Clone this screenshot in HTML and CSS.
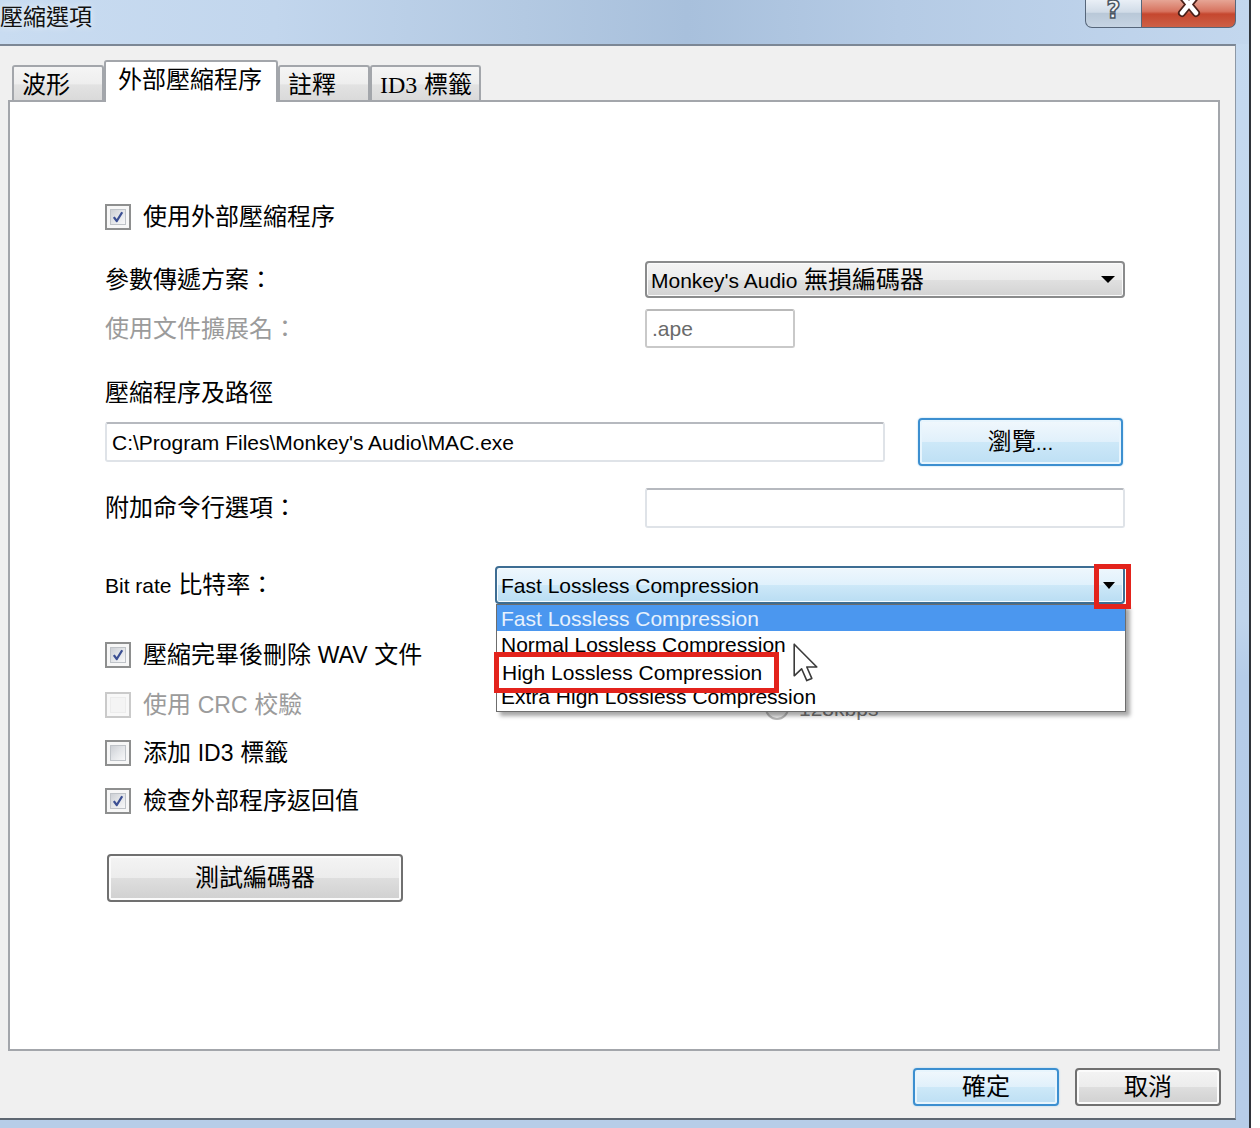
FILE: index.html
```html
<!DOCTYPE html>
<html>
<head>
<meta charset="utf-8">
<title>壓縮選項</title>
<link rel="stylesheet" href="styles.css">
</head>
<body>
<div class="window">
  <div class="titlebar">
    <div class="title">壓縮選項</div>
    <div class="caps">
      <div class="cap help"><span class="q">?</span></div>
      <div class="cap close">
        <svg class="xicon" width="30" height="20" viewBox="0 0 30 20"><path d="M8 -3 L22 14 M22 -3 L8 14" stroke="#4a2019" stroke-width="8" stroke-linecap="round"/><path d="M8 -3 L22 14 M22 -3 L8 14" stroke="#ffffff" stroke-width="4.5" stroke-linecap="round"/></svg>
      </div>
    </div>
  </div>
  <div class="client">
    <div class="tabs">
      <div class="tab t1">波形</div>
      <div class="tab active">外部壓縮程序</div>
      <div class="tab t3">註釋</div>
      <div class="tab t4"><span class="en-tab">ID3</span>&nbsp;標籤</div>
    </div>
    <div class="panel">
      <div class="row r-a">
        <span class="cb"><span class="cbi"><svg viewBox="0 0 16 16"><path d="M3.2 8.2 L6.6 12.6 L12.8 2.6" fill="none" stroke="#3b4f93" stroke-width="2.6" stroke-linejoin="round"/></svg></span></span>
        <span class="cb-label">使用外部壓縮程序</span>
      </div>
      <div class="row r-b">
        <div class="lbl">參數傳遞方案：</div>
        <div class="combo normal w480"><span class="ctext"><span class="en">Monkey's Audio</span> 無損編碼器</span><span class="arrow"></span></div>
      </div>
      <div class="row r-c">
        <div class="lbl dis">使用文件擴展名：</div>
        <div class="input ext"><span class="en gray">.ape</span></div>
      </div>
      <div class="row r-d">
        <div class="lbl">壓縮程序及路徑</div>
      </div>
      <div class="row r-e">
        <div class="input path"><span class="en">C:\Program Files\Monkey's Audio\MAC.exe</span></div>
        <div class="btn blue browse">瀏覽<span class="en">...</span></div>
      </div>
      <div class="row r-f">
        <div class="lbl">附加命令行選項：</div>
        <div class="input w480"></div>
      </div>
      <div class="row r-g">
        <div class="lbl lbl-g"><span class="en">Bit rate</span> 比特率：</div>
        <div class="combo hot w630">
          <span class="ctext en">Fast Lossless Compression</span><span class="arrow hot-arrow"></span>
          <div class="behind"><span class="radio"></span><span class="en">128kbps</span></div>
          <div class="list">
            <div class="item sel en">Fast Lossless Compression</div>
            <div class="item en">Normal Lossless Compression</div>
            <div class="item en">High Lossless Compression</div>
            <div class="item en">Extra High Lossless Compression</div>
          </div>
          <div class="redbox arrowbox"></div>
          <div class="redbox highbox"><span class="en">High Lossless Compression</span></div>
          <svg class="cursor" width="26" height="40" viewBox="0 0 13 20"><path d="M0.6 0.6 L0.6 16.4 L4.3 12.9 L6.9 18.8 L9.4 17.7 L6.9 12 L11.9 12 Z" fill="#ffffff" stroke="#3a3a3a" stroke-width="0.8" stroke-linejoin="round"/></svg>
        </div>
      </div>
      <div class="row r-h1">
        <span class="cb"><span class="cbi"><svg viewBox="0 0 16 16"><path d="M3.2 8.2 L6.6 12.6 L12.8 2.6" fill="none" stroke="#3b4f93" stroke-width="2.6" stroke-linejoin="round"/></svg></span></span>
        <span class="cb-label">壓縮完畢後刪除 <span class="en-in">WAV</span> 文件</span>
      </div>
      <div class="row r-h2">
        <span class="cb disabled"><span class="cbi"></span></span>
        <span class="cb-label dis">使用 <span class="en-in">CRC</span> 校驗</span>
      </div>
      <div class="row r-h3">
        <span class="cb"><span class="cbi"></span></span>
        <span class="cb-label">添加 <span class="en-in">ID3</span> 標籤</span>
      </div>
      <div class="row r-h4">
        <span class="cb"><span class="cbi"><svg viewBox="0 0 16 16"><path d="M3.2 8.2 L6.6 12.6 L12.8 2.6" fill="none" stroke="#3b4f93" stroke-width="2.6" stroke-linejoin="round"/></svg></span></span>
        <span class="cb-label">檢查外部程序返回值</span>
      </div>
      <div class="row r-i">
        <div class="btn test">測試編碼器</div>
      </div>
    </div>
    <div class="footer">
      <div class="btn blue ok">確定</div>
      <div class="btn cancel">取消</div>
    </div>
  </div>
</div>
</body>
</html>
```

FILE: styles.css
```css
* { box-sizing: border-box; }

body {
  margin: 0;
  background: #ffffff;
  font-family: "Liberation Sans", "Noto Sans CJK TC", sans-serif;
  font-size: 24px;
  line-height: 1;
  color: #000;
}

.en {
  font-family: "Liberation Sans", sans-serif;
  font-size: 21px;
}

.en-in {
  font-family: "Liberation Sans", sans-serif;
  font-size: 23px;
}

.en-tab {
  font-family: "Liberation Serif", serif;
  font-size: 24px;
}

.window {
  width: 1251px;
  height: 1128px;
  border-right: 2px solid #2f343a;
  background: linear-gradient(to bottom, #c6daf0 0%, #c0d5ec 55%, #b5cce8 60%, #b7cde8 100%);
  display: flex;
  flex-direction: column;
  overflow: hidden;
}

/* title bar */
.titlebar {
  height: 44px;
  flex: none;
  display: flex;
  align-items: flex-start;
  background: linear-gradient(to right, #c9dcf1 0%, #c2d6ed 22%, #b3c9e2 42%, #a8c0dc 55%, #b5cbe5 72%, #c3d7ee 100%);
}

.title {
  font-size: 23px;
  margin-top: 6px;
  color: #111;
  text-shadow: 0 0 6px rgba(255, 255, 255, 0.9);
}

.caps {
  margin-left: auto;
  margin-right: 13px;
  display: flex;
}

.cap {
  height: 28px;
  border: 1px solid #56667a;
  border-top: none;
  overflow: hidden;
  display: flex;
  justify-content: center;
}

.help {
  width: 57px;
  border-radius: 0 0 0 7px;
  background: linear-gradient(to bottom, #e9eff6 0%, #d0dbe7 45%, #b9c8d8 50%, #c6d4e3 100%);
}

.q {
  font-family: "DejaVu Sans", sans-serif;
  font-weight: bold;
  font-size: 24px;
  line-height: 1;
  margin-top: -2px;
  color: #f3f5f8;
  -webkit-text-stroke: 1.5px #4b5663;
}

.close {
  width: 94px;
  border-left: none;
  border-radius: 0 0 7px 0;
  background: linear-gradient(to bottom, #e6a595 0%, #d7735f 42%, #c5472f 52%, #cd6046 100%);
}

.xicon { margin-top: -1px; }

/* client */
.client {
  width: 1236px;
  height: 1076px;
  flex: none;
  background: #f0f0f0;
  border-top: 2px solid #7c8795;
  border-right: 1px solid #8d98a5;
  border-bottom: 2px solid #5e6772;
}

.tabs {
  display: flex;
  align-items: flex-end;
  padding-left: 12px;
  margin-top: 14px;
  margin-bottom: -2px;
  position: relative;
  z-index: 1;
}

.tab {
  height: 35px;
  margin-bottom: 2px;
  border: 2px solid #a3a6ab;
  border-bottom: none;
  border-radius: 3px 3px 0 0;
  background: linear-gradient(to bottom, #f5f5f5 0%, #eeeeee 50%, #e2e2e2 55%, #dadada 100%);
  display: flex;
  align-items: center;
  padding-left: 8px;
  padding-top: 2px;
}

.t1 { width: 92px; }
.t3 { width: 92px; }
.t4 { width: 111px; }

.tab.active {
  width: 174px;
  height: 42px;
  margin-bottom: 0;
  background: #ffffff;
  padding-left: 12px;
  padding-top: 0;
  padding-bottom: 4px;
}

.panel {
  margin-left: 8px;
  width: 1212px;
  height: 951px;
  border: 2px solid #a3a6ab;
  background: #ffffff;
  padding-left: 95px;
  display: flex;
  flex-direction: column;
}

.row {
  display: flex;
  align-items: center;
  flex: none;
}

.r-a { margin-top: 102px; height: 26px; }
.r-b { margin-top: 31px; height: 37px; }
.r-c { margin-top: 11px; height: 39px; }
.r-d { margin-top: 30px; height: 30px; }
.r-e { margin-top: 10px; height: 48px; }
.r-f { margin-top: 22px; height: 40px; }
.r-g { margin-top: 38px; height: 38px; }
.r-h1 { margin-top: 38px; height: 26px; }
.r-h2 { margin-top: 24px; height: 26px; }
.r-h3 { margin-top: 22px; height: 26px; }
.r-h4 { margin-top: 22px; height: 26px; }
.r-i { margin-top: 40px; height: 48px; }

.lbl {
  width: 540px;
  flex: none;
}

.lbl-g { width: 390px; }

.dis { color: #9b9b9b; }
.gray { color: #6a6a6a; }

/* checkbox */
.cb {
  width: 26px;
  height: 26px;
  flex: none;
  border: 2px solid #8e8f8f;
  background: #f7f7f7;
  padding: 3px;
  display: flex;
}

.cbi {
  flex: 1;
  border: 1px solid #bfc3c8;
  background: linear-gradient(135deg, #cdd0d5 0%, #e4e6e9 50%, #f8f8f9 100%);
  display: flex;
}

.cbi svg {
  width: 100%;
  height: 100%;
  overflow: visible;
}

.cb.disabled {
  border-color: #cacaca;
  background: #f8f8f8;
}

.cb.disabled .cbi {
  border-color: #ececec;
  background: #f4f4f4;
}

.cb-label {
  margin-left: 12px;
}

/* combo boxes */
.combo {
  position: relative;
  height: 100%;
  border: 2px solid #8a8b8c;
  border-radius: 4px;
  display: flex;
  align-items: center;
  padding-left: 4px;
}

.combo.normal {
  background: linear-gradient(to bottom, #f4f4f4 0%, #ececec 50%, #e0e0e0 51%, #d3d3d3 100%);
  box-shadow: inset 0 0 0 1px #fbfbfb;
}

.combo.hot {
  border-color: #3d6d93;
  background: linear-gradient(to bottom, #eef7fd 0%, #e0f1fc 50%, #cde8f8 51%, #b9ddf3 100%);
  box-shadow: inset 0 0 0 1px #f6fbfe;
}

.w480 { width: 480px; flex: none; }
.w630 { width: 630px; flex: none; }

.arrow {
  margin-left: auto;
  margin-right: 8px;
  width: 0;
  height: 0;
  border-left: 7px solid transparent;
  border-right: 7px solid transparent;
  border-top: 7px solid #000;
}

.hot-arrow {
  margin-right: 8px;
  border-left-width: 6px;
  border-right-width: 6px;
}

/* text inputs */
.input {
  height: 40px;
  background: #ffffff;
  border: 2px solid #dfe3e8;
  border-top-color: #b6b9bf;
  border-radius: 3px;
  display: flex;
  align-items: center;
  padding-left: 5px;
  flex: none;
}

.input.ext {
  width: 150px;
  height: 39px;
  border-color: #c9c9c9;
  border-top-color: #b9b9b9;
}

.input.path {
  width: 780px;
}

.input.w480 { width: 480px; }

/* buttons */
.btn {
  display: flex;
  align-items: center;
  justify-content: center;
  border: 2px solid #707070;
  border-radius: 4px;
  background: linear-gradient(to bottom, #f4f4f4 0%, #ececec 50%, #dedede 51%, #d0d0d0 100%);
  box-shadow: inset 0 0 0 2px #fbfbfb;
  flex: none;
}

.btn.blue {
  border-color: #3c8fd0;
  background: linear-gradient(to bottom, #f1f8fd 0%, #e0f0fb 50%, #cde8f8 51%, #bddff4 100%);
  box-shadow: inset 0 0 0 2px #e8f5fd, 0 0 2px #9fd0f0;
}

.browse {
  width: 205px;
  height: 48px;
  margin-left: 33px;
}

.test {
  width: 296px;
  height: 48px;
  margin-left: 2px;
}

.footer {
  display: flex;
  justify-content: flex-end;
  gap: 16px;
  padding: 17px 14px 0 0;
}

.footer .btn {
  width: 146px;
  height: 38px;
}

/* open dropdown overlay */
.list {
  position: absolute;
  left: -1px;
  top: 36px;
  width: 630px;
  height: 108px;
  border: 1px solid #6d6d6d;
  background: #ffffff;
  box-shadow: 4px 4px 4px rgba(0, 0, 0, 0.35);
  z-index: 2;
  padding-bottom: 2px;
}

.item {
  height: 26px;
  display: flex;
  align-items: center;
  padding-left: 4px;
  white-space: nowrap;
}

.item.sel {
  background: #4b97ef;
  color: #e6f1fd;
}

.redbox {
  position: absolute;
  border: 5px solid #e3231c;
  z-index: 3;
}

.arrowbox {
  left: 597px;
  top: -4px;
  width: 37px;
  height: 45px;
}

.highbox {
  left: -3px;
  top: 84px;
  width: 285px;
  height: 41px;
  background: #ffffff;
  display: flex;
  align-items: center;
  padding-left: 3px;
  padding-bottom: 1px;
  white-space: nowrap;
}

.cursor {
  position: absolute;
  left: 296px;
  top: 75px;
  z-index: 4;
}

.behind {
  position: absolute;
  left: 268px;
  top: 128px;
  display: flex;
  align-items: center;
  gap: 10px;
  color: #777;
  z-index: 0;
}

.radio {
  width: 24px;
  height: 24px;
  border-radius: 50%;
  border: 2px solid #b8b8b8;
  background: #eeeeee;
}
```
